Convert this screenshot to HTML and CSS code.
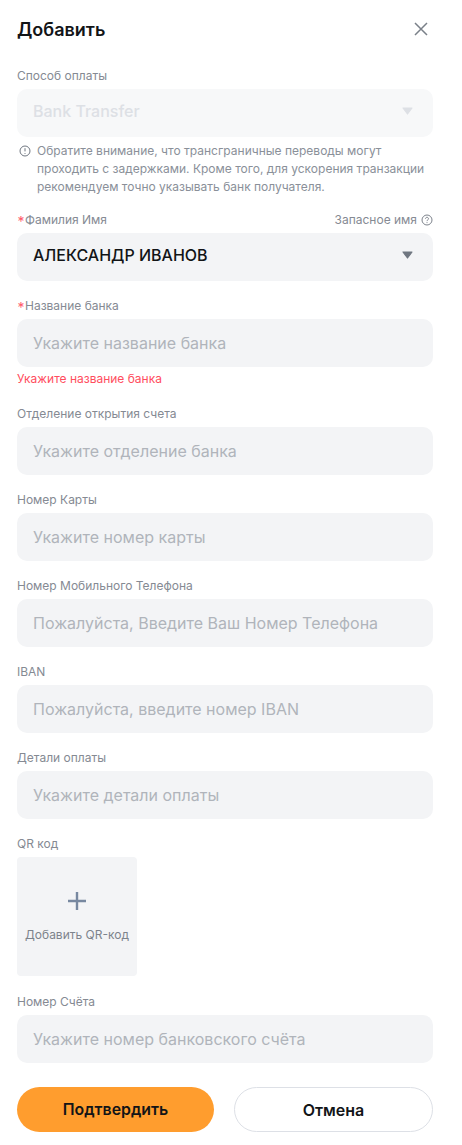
FILE: index.html
```html
<!DOCTYPE html>
<html lang="ru">
<head>
<meta charset="utf-8">
<title>Добавить</title>
<link rel="stylesheet" href="styles.css">
</head>
<body>
<main class="dialog">
  <header class="head">
    <h1 class="title">Добавить</h1>
    <button class="close" type="button" aria-label="Закрыть">
      <svg viewBox="0 0 14 14" width="14" height="14"><path d="M1 1l12 12M13 1L1 13" fill="none" stroke="#7a8089" stroke-width="1.5"/></svg>
    </button>
  </header>

  <section class="field field-note">
    <div class="label"><span>Способ оплаты</span></div>
    <div class="box box-disabled"><span class="box-text">Bank Transfer</span>
      <svg class="caret" viewBox="0 0 11 8" width="11" height="8"><path d="M1 1h9L5.5 7z" fill="#dde0e5" stroke="#dde0e5" stroke-width="1.2" stroke-linejoin="round"/></svg>
    </div>
    <div class="note">
      <svg class="note-icon" viewBox="0 0 12 12" width="12" height="12"><circle cx="6" cy="6" r="5" fill="none" stroke="#6f7680" stroke-width="1"/><path d="M6 3.2v3.2M6 8v.9" fill="none" stroke="#6f7680" stroke-width="1"/></svg>
      <p>Обратите внимание, что трансграничные переводы могут проходить с задержками. Кроме того, для ускорения транзакции рекомендуем точно указывать банк получателя.</p>
    </div>
  </section>

  <section class="field">
    <div class="label">
      <span class="label-req"><b class="req">*</b>Фамилия Имя</span>
      <span class="alt">Запасное имя
        <svg viewBox="0 0 12 12" width="12" height="12"><circle cx="6" cy="6" r="5" fill="none" stroke="#7d838c" stroke-width="1"/><path d="M4.5 4.8c0-2 3-2 3 0 0 1.1-1.5 1.1-1.5 2.3M6 8.2v.9" fill="none" stroke="#7d838c" stroke-width="1"/></svg>
      </span>
    </div>
    <div class="box box-value"><span class="box-text">АЛЕКСАНДР ИВАНОВ</span>
      <svg class="caret" viewBox="0 0 11 8" width="11" height="8"><path d="M1 1h9L5.5 7z" fill="#6f7680" stroke="#6f7680" stroke-width="1.2" stroke-linejoin="round"/></svg>
    </div>
  </section>

  <section class="field">
    <div class="label"><span class="label-req"><b class="req">*</b>Название банка</span></div>
    <div class="box">Укажите название банка</div>
    <div class="error">Укажите название банка</div>
  </section>

  <section class="field">
    <div class="label"><span>Отделение открытия счета</span></div>
    <div class="box">Укажите отделение банка</div>
  </section>

  <section class="field">
    <div class="label"><span>Номер Карты</span></div>
    <div class="box">Укажите номер карты</div>
  </section>

  <section class="field">
    <div class="label"><span>Номер Мобильного Телефона</span></div>
    <div class="box">Пожалуйста, Введите Ваш Номер Телефона</div>
  </section>

  <section class="field">
    <div class="label"><span>IBAN</span></div>
    <div class="box">Пожалуйста, введите номер IBAN</div>
  </section>

  <section class="field">
    <div class="label"><span>Детали оплаты</span></div>
    <div class="box">Укажите детали оплаты</div>
  </section>

  <section class="field">
    <div class="label"><span>QR код</span></div>
    <div class="upload">
      <svg viewBox="0 0 18 18" width="18" height="18"><path d="M9 0v18M0 9h18" fill="none" stroke="#7788a0" stroke-width="2.4"/></svg>
      <span>Добавить QR-код</span>
    </div>
  </section>

  <section class="field">
    <div class="label"><span>Номер Счёта</span></div>
    <div class="box">Укажите номер банковского счёта</div>
  </section>

  <footer class="actions">
    <button class="btn btn-primary" type="button">Подтвердить</button>
    <button class="btn btn-ghost" type="button">Отмена</button>
  </footer>
</main>
</body>
</html>
```
FILE: styles.css
```css
* { box-sizing: border-box; }
html, body { margin: 0; padding: 0; background: #fff; }
body { font-family: Inter, "Noto Sans", sans-serif; color: #121417; }
.dialog { width: 450px; height: 1145px; padding: 16px 17px 0; overflow: hidden; }
.head { display: flex; justify-content: space-between; align-items: center; height: 26px; margin-bottom: 23px; }
.title { margin: 0; padding-top: 1px; font-size: 18px; line-height: 26px; font-weight: 600; color: #121417; }
.close { border: 0; background: none; padding: 0; display: flex; width: 14px; height: 14px; margin-right: 5px; margin-top: -1px; }
.field { margin-bottom: 14px; }
.field-note { margin-bottom: 13px; }
.label { display: flex; justify-content: space-between; align-items: center; height: 22px; margin-bottom: 2px; font-size: 12px; line-height: 22px; color: #858a93; }
.label-req { display: flex; align-items: center; }
.req { display: flex; align-items: center; justify-content: center; width: 8px; height: 22px; padding-top: 4px; font-size: 14px; font-weight: 400; color: #ff5a6a; }
.alt { display: flex; align-items: center; gap: 4px; }
.box { display: flex; align-items: center; justify-content: space-between; height: 48px; padding: 0 20px 0 16px; background: #f3f4f6; border-radius: 10px; font-size: 16px; color: #b0b4bb; }
.box-disabled { background: #f7f8f9; color: #dde0e5; font-weight: 500; }
.box-value { color: #121417; font-weight: 500; }
.box-text { padding-bottom: 5px; }
.caret { flex: none; margin-bottom: 5px; }
.note { display: flex; gap: 6px; padding: 5px 0 0 2px; font-size: 12px; line-height: 18px; color: #8a9099; }
.note-icon { flex: none; margin-top: 3px; }
.note p { margin: 0; }
.error { margin-top: 3px; font-size: 12px; line-height: 18px; color: #ff4d5e; }
.upload { display: flex; flex-direction: column; align-items: center; width: 120px; height: 119px; padding-top: 35px; background: #f3f4f6; border-radius: 4px; font-size: 12px; color: #7d838c; }
.upload span { margin-top: 16px; line-height: 18px; white-space: nowrap; }
.field:has(.error) { margin-bottom: 15px; }
.field:has(.upload) { margin-bottom: 15px; }
.actions { display: flex; gap: 20px; margin-top: 24px; }
.btn { height: 45px; border-radius: 23px; font: 600 16px Inter, "Noto Sans", sans-serif; color: #121417; }
.btn-primary { width: 197px; background: #ff9d2e; border: 0; font-size: 15.85px; }
.btn-ghost { width: 199px; background: #fff; border: 1px solid #dde0e6; }
```
